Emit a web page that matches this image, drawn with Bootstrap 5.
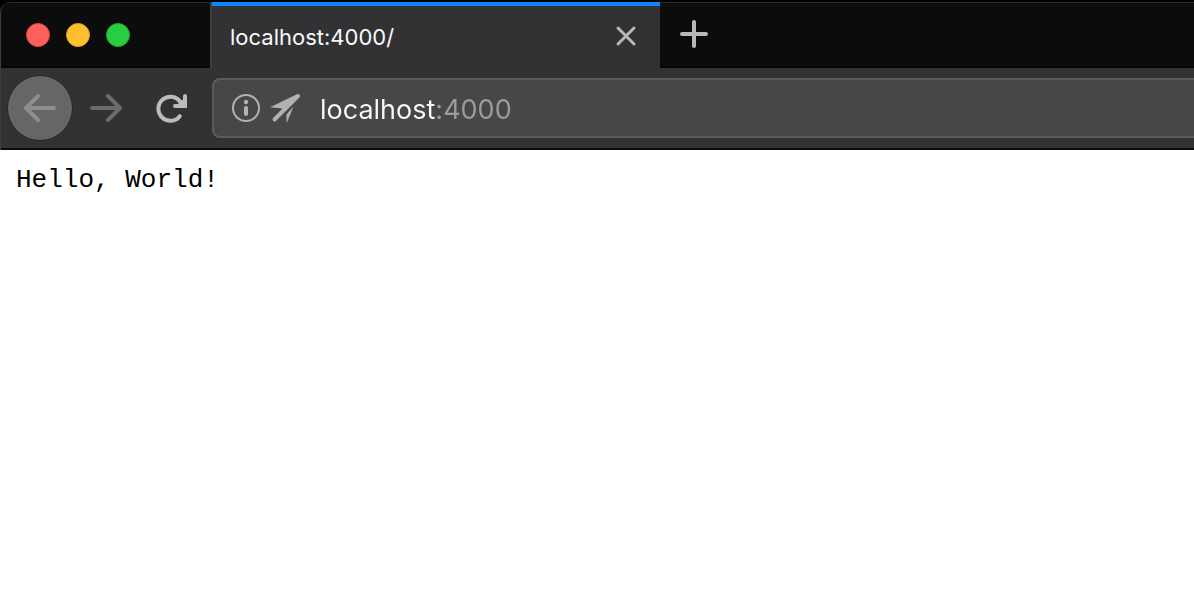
<!DOCTYPE html>
<html lang="en">
<head>
<meta charset="utf-8">
<meta name="viewport" content="width=device-width, initial-scale=1">
<title>localhost:4000/</title>
<link href="https://cdn.jsdelivr.net/npm/bootstrap@5.3.0/dist/css/bootstrap.min.css" rel="stylesheet">
<style>
  body { background: #fff; font-family: Inter, "Liberation Sans", sans-serif; }
  .browser { background: #000; padding-top: 2px; }
  .frame { background: #323234; border-left: 1px solid #3c3c3e; border-top-left-radius: 10px; overflow: hidden; }
  .tab-strip { background: #0c0c0d; height: 66px; }
  .strip-part { border-top: 1px solid #29292a; border-bottom: 2px solid #050505; }
  .lights { width: 209px; padding-left: 25px; gap: 16px; padding-top: 1px; }
  .light { width: 24px; height: 24px; border-radius: 50%; border: 1px solid; padding: 0; }
  .light-close { background: #ff6059; border-color: #e2463f; }
  .light-min { background: #ffbf2f; border-color: #dfa023; }
  .light-max { background: #29cd42; border-color: #1dad2b; }
  .page-tab { width: 450px; background: #323234; border-left: 2px solid #3e3e40; }
  .page-tab-body { border-top: 4px solid #0a84ff; padding: 0 22px 0 18px; }
  .page-tab-title { font-size: 22px; line-height: 28px; color: #f9f9fa; }
  .icon-btn { background: none; border: 0; padding: 0; color: #b8b8b9; display: flex; }
  .close-tab { padding-bottom: 2px; }
  .new-tab { padding: 0 0 2px 20px; }
  .toolbar { height: 82px; border-bottom: 2px solid #0c0c0d; padding-left: 6px; }
  .back { width: 66px; height: 66px; border-radius: 50%; background: #666667; border: 1px solid #262627; color: #8e8e8f; }
  .forward { width: 66px; color: #6b6b6d; }
  .reload { width: 64px; color: #bcbcbd; }
  .address { height: 60px; margin-left: 9px; background: #474749; border: 2px solid #5a5a5c; border-right: 0; border-radius: 8px 0 0 8px; padding-left: 16px; gap: 8px; color: #b1b1b3; }
  .address .icon-btn { color: #b1b1b3; }
  .address-input { border: 0; outline: 0; padding: 4px 0 0; margin-left: 10px; font-size: 27px; line-height: 36px;
    /* host name bright, port dimmed */
    background: linear-gradient(90deg, #f9f9fa 115px, #9c9c9e 115px); -webkit-background-clip: text; background-clip: text; -webkit-text-fill-color: transparent; }
  .document { padding: 14px 16px; }
  .document pre { font-family: "Courier New", "Liberation Mono", monospace; font-size: 26px; line-height: 32px; color: #000; overflow: visible; }
</style>
</head>
<body>
<header class="browser">
  <div class="frame">
    <div class="tab-strip d-flex">
      <div class="strip-part lights d-flex align-items-center flex-shrink-0">
        <button class="light light-close" aria-label="Close window"></button>
        <button class="light light-min" aria-label="Minimize"></button>
        <button class="light light-max" aria-label="Zoom"></button>
      </div>
      <div class="page-tab flex-shrink-0">
        <div class="page-tab-body h-100 d-flex align-items-center justify-content-between">
          <span class="page-tab-title">localhost:4000/</span>
          <button class="icon-btn close-tab" aria-label="Close tab">
            <svg width="24" height="24" viewBox="0 0 24 24" fill="none" stroke="currentColor" stroke-width="3" stroke-linecap="round"><path d="M4 4 20 20M20 4 4 20"/></svg>
          </button>
        </div>
      </div>
      <div class="strip-part new-tab flex-grow-1 d-flex align-items-center">
        <button class="icon-btn" aria-label="New tab">
          <svg width="28" height="28" viewBox="0 0 28 28" fill="none" stroke="currentColor" stroke-width="4" stroke-linecap="round"><path d="M14 2V26M2 14H26"/></svg>
        </button>
      </div>
    </div>
    <nav class="toolbar d-flex align-items-center" aria-label="Navigation">
      <button class="icon-btn back align-items-center justify-content-center flex-shrink-0" aria-label="Back">
        <svg width="32" height="32" viewBox="0 0 32 32" fill="none" stroke="currentColor" stroke-width="4" stroke-linecap="round" stroke-linejoin="round"><path d="M30 16H2M14 4 2 16 14 28"/></svg>
      </button>
      <button class="icon-btn forward justify-content-center flex-shrink-0" aria-label="Forward">
        <svg width="32" height="32" viewBox="0 0 32 32" fill="none" stroke="currentColor" stroke-width="4" stroke-linecap="round" stroke-linejoin="round"><path d="M2 16H30M18 4 30 16 18 28"/></svg>
      </button>
      <button class="icon-btn reload justify-content-center flex-shrink-0" aria-label="Reload">
        <svg width="32" height="32" viewBox="0 0 32 32" fill="none" stroke="currentColor" stroke-width="4" stroke-linecap="round" stroke-linejoin="round"><path d="M24.800 24.200A12 12 0 1 1 25 9.500L28 13"/><path d="M30 4V14H20" stroke-linejoin="miter"/><path d="M28 8V12H24Z" stroke-width="1" fill="currentColor"/></svg>
      </button>
      <div class="address flex-grow-1 d-flex align-items-center">
        <button class="icon-btn" aria-label="Site information">
          <svg width="32" height="32" viewBox="0 0 32 32" fill="none" stroke="currentColor"><circle cx="16" cy="16" r="13" stroke-width="2"/><circle cx="16" cy="10" r="2.200" fill="currentColor" stroke="none"/><path d="M16 16V22" stroke-width="4" stroke-linecap="round"/></svg>
        </button>
        <button class="icon-btn" aria-label="Permissions">
          <svg width="32" height="32" viewBox="0 0 32 32" fill="currentColor"><path d="M4.500 27.500 28 4" fill="none" stroke="currentColor" stroke-width="4" stroke-linecap="round"/><path d="M0 15.300 27 2.300 29.500 5 14 19.500 12 16.500Z"/><path d="M23.500 14.500 16.500 22.500V31.500Z"/></svg>
        </button>
        <input class="address-input flex-grow-1" type="text" value="localhost:4000" aria-label="Address" spellcheck="false">
      </div>
    </nav>
  </div>
</header>
<main class="document"><pre class="m-0">Hello, World!</pre></main>
<script src="https://cdn.jsdelivr.net/npm/bootstrap@5.3.0/dist/js/bootstrap.bundle.min.js"></script>
</body>
</html>
